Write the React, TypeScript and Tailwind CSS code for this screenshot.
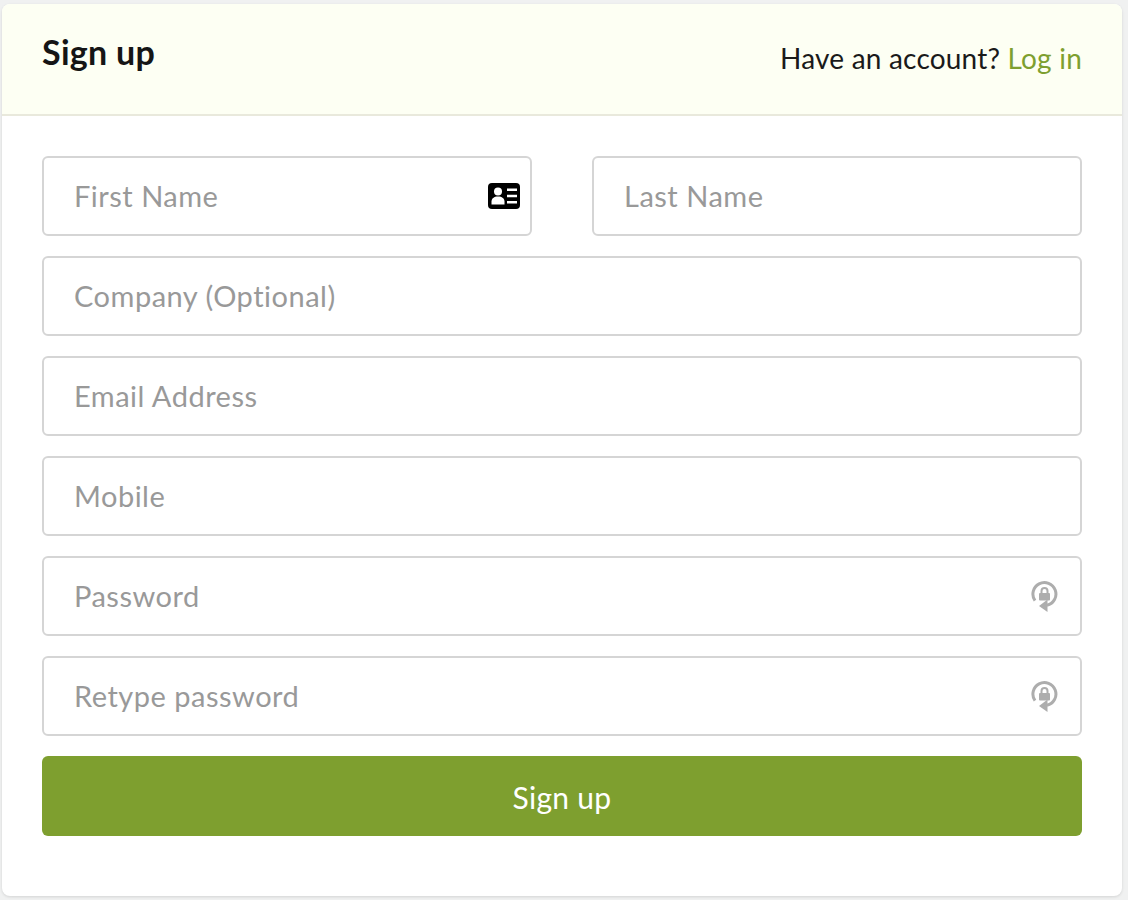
const font = "font-['Lato','Open_Sans',sans-serif]";

function IdCardIcon() {
  return (
    <svg width="32" height="26" viewBox="0 0 32 26" className="mr-2.5 shrink-0">
      <rect width="32" height="26" rx="4" fill="#000" />
      <circle cx="10" cy="8.500" r="4" fill="#fff" />
      <path d="M3.500 21.500v-3c0-3 2.500-5 6.500-5s6.500 2 6.500 5v3z" fill="#fff" />
      <path d="M19 5.500h10V8H19zM19 11.700h10v2.500H19zM19 18h10v2.500H19z" fill="#fff" />
    </svg>
  );
}

function LockCycleIcon() {
  return (
    <svg width="27" height="34" viewBox="0 0 27 34" className="mr-[22px] shrink-0">
      <path
        d="M4 21.700A11.500 11.500 0 1 1 16 26.300"
        fill="none"
        stroke="#adadad"
        strokeWidth="3"
      />
      <path d="M16.500 20.500v12.500L8 27z" fill="#adadad" />
      <rect x="8" y="14" width="11" height="7.500" rx="1" fill="#adadad" />
      <path d="M10.500 14v-2a3 3 0 0 1 6 0v2" fill="none" stroke="#adadad" strokeWidth="2" />
    </svg>
  );
}

function Field({
  placeholder,
  type = "text",
  icon,
}: {
  placeholder: string;
  type?: string;
  icon?: React.ReactNode;
}) {
  return (
    <div
      className={`flex h-20 items-center rounded-md border-2 border-[#d5d5d5] bg-white pl-[30px] ${
        icon ? "" : "pr-[30px]"
      }`}
    >
      <input
        type={type}
        placeholder={placeholder}
        className="-mt-px w-full min-w-0 bg-transparent text-[29px] tracking-[0.5px] text-[#333] outline-none placeholder:text-[#999]"
      />
      {icon}
    </div>
  );
}

export default function App() {
  return (
    <div className={`h-[900px] bg-[#f0f1f1] px-0.5 pt-1 ${font}`}>
      <div className="h-[892px] w-[1120px] overflow-hidden rounded-lg bg-white shadow-[0_1px_3px_rgba(0,0,0,0.12)]">
        <header className="flex h-28 items-start justify-between border-b-2 border-[#e9e9dc] bg-[#fdfff3] px-10">
          <h1 className="mt-[26px] text-[34px] leading-[44px] font-bold tracking-[0.3px] text-[#151515]">
            Sign up
          </h1>
          <p className="mt-[34px] text-[28px] leading-10 tracking-[0.2px] text-[#1a1a1a]">
            Have an account?{" "}
            <a href="#" className="text-[#7e9f2f]">
              Log in
            </a>
          </p>
        </header>
        <form className="flex flex-col gap-5 px-10 pt-10">
          <div className="grid grid-cols-2 gap-[60px]">
            <Field placeholder="First Name" icon={<IdCardIcon />} />
            <Field placeholder="Last Name" />
          </div>
          <Field placeholder="Company (Optional)" />
          <Field placeholder="Email Address" type="email" />
          <Field placeholder="Mobile" />
          <Field placeholder="Password" type="password" icon={<LockCycleIcon />} />
          <Field placeholder="Retype password" type="password" icon={<LockCycleIcon />} />
          <button
            type="button"
            className="h-20 rounded-md bg-[#7e9f2f] pt-0.5 text-[30px] tracking-[0.3px] text-white"
          >
            Sign up
          </button>
        </form>
      </div>
    </div>
  );
}
